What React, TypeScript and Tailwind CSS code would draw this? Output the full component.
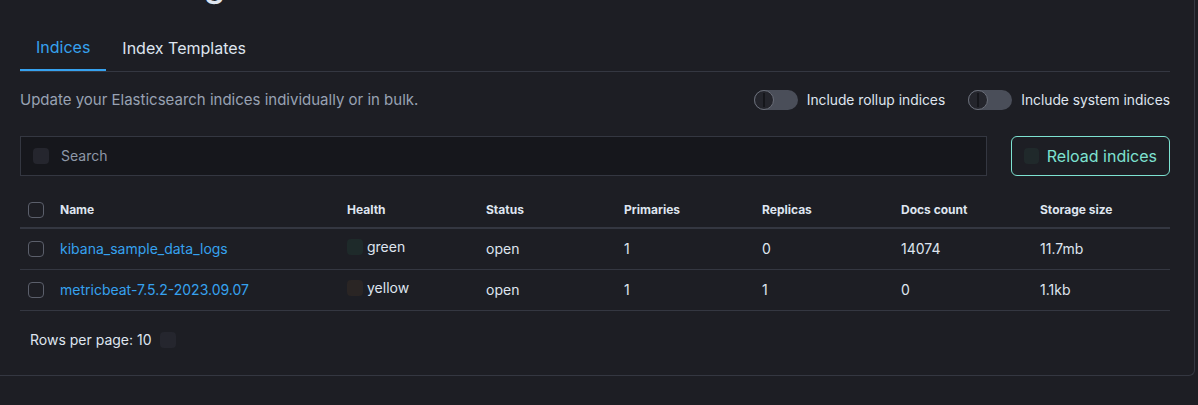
import React from 'react';

const rows = [
  { name: 'kibana_sample_data_logs', health: 'green', status: 'open', primaries: '1', replicas: '0', docs: '14074', size: '11.7mb' },
  { name: 'metricbeat-7.5.2-2023.09.07', health: 'yellow', status: 'open', primaries: '1', replicas: '1', docs: '0', size: '1.1kb' },
];

const cols = 'grid grid-cols-[32px_287px_139px_138px_138px_139px_139px_138px]';

function Checkbox() {
  return <span className="block w-4 h-4 rounded-[4px] border border-[#5b5f6b]" />;
}

function Toggle({ label }: { label: string }) {
  return (
    <label className="flex items-center gap-[9px]">
      <span className="relative w-[44px] h-[20px] rounded-full bg-[#4a4e59]">
        <span className="absolute left-0 top-0 w-[20px] h-[20px] rounded-full bg-[#24252c] border border-[#6a6e79] flex items-center justify-center">
          <span className="w-[2px] h-[14px] bg-[#15161b]" />
        </span>
      </span>
      <span className="text-[13.8px] text-[#dfe5ef]">{label}</span>
    </label>
  );
}

export default function App() {
  return (
    <div className="h-[405px] overflow-hidden bg-[#1d1e24] font-['Inter',sans-serif]">
      <div className="flow-root w-[1195px] pl-5 pr-6 pb-[25px] border-r border-b border-[#343741] rounded-br-md">
        <h1 className="-mt-[34px] text-[33px] leading-[38px] font-semibold text-[#dfe5ef]">Index Management</h1>

        {/* Tabs */}
        <div className="mt-[20px] flex border-b border-[#343741]">
          <button className="h-[47px] px-4 text-base text-[#36a2ef] border-b-2 border-[#36a2ef] -mb-px">Indices</button>
          <button className="h-[47px] px-4 text-base text-[#dfe5ef]">Index Templates</button>
        </div>

        <div className="mt-[18px] flex items-center justify-between h-5">
          <p className="text-[15px] text-[#98a2b3]">Update your Elasticsearch indices individually or in bulk.</p>
          <div className="flex items-center gap-[23px]">
            <Toggle label="Include rollup indices" />
            <Toggle label="Include system indices" />
          </div>
        </div>

        {/* Search + reload */}
        <div className="mt-[26px] flex gap-6">
          <div className="flex-1 h-10 flex items-center gap-3 px-3 bg-[#16171c] border border-[#343741]">
            <span className="w-4 h-4 rounded bg-[#25262e]" />
            <span className="text-sm text-[#8e98a8]">Search</span>
          </div>
          <button className="w-[159px] h-10 flex items-center gap-2 px-3 rounded-md border border-[#7de2d1] text-base text-[#7de2d1] whitespace-nowrap">
            <span className="w-4 h-4 rounded bg-[#20292b]" />
            Reload indices
          </button>
        </div>

        {/* Table */}
        <div className="mt-[17px]">
          <div className={`${cols} h-[36px] items-center border-b-2 border-[#343741] text-xs font-bold text-[#dfe5ef]`}>
            <div className="pl-2"><Checkbox /></div>
            <div className="px-2">Name</div>
            <div className="px-2">Health</div>
            <div className="px-2">Status</div>
            <div className="px-2">Primaries</div>
            <div className="px-2">Replicas</div>
            <div className="px-2">Docs count</div>
            <div className="px-2">Storage size</div>
          </div>
          {rows.map((r) => (
            <div key={r.name} className={`${cols} h-[41px] items-center border-b border-[#343741] text-sm text-[#dfe5ef]`}>
              <div className="pl-2"><Checkbox /></div>
              <div className="px-2 text-[#36a2ef]">{r.name}</div>
              <div className="px-2 flex items-center gap-1 -mt-1">
                <span className={`w-4 h-4 rounded ${r.health === 'green' ? 'bg-[#1e2a2a]' : 'bg-[#2a2524]'}`} />
                {r.health}
              </div>
              <div className="px-2">{r.status}</div>
              <div className="px-2">{r.primaries}</div>
              <div className="px-2">{r.replicas}</div>
              <div className="px-2">{r.docs}</div>
              <div className="px-2">{r.size}</div>
            </div>
          ))}
          <div className="mt-[19px] pl-[10px] flex items-center gap-2 text-sm text-[#dfe5ef]">
            Rows per page: 10
            <span className="w-4 h-4 rounded bg-[#25262e]" />
          </div>
        </div>
      </div>
    </div>
  );
}
